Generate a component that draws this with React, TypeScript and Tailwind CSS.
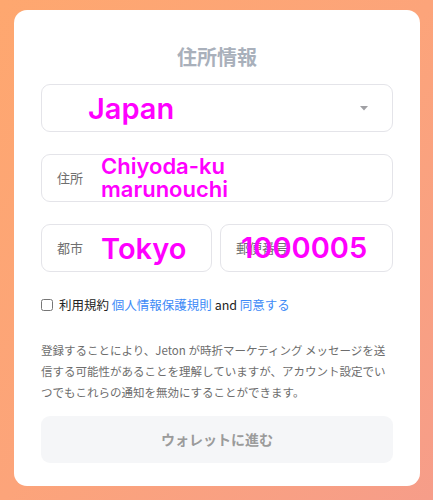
import { useState } from "react";

const cjk = "font-['Noto_Sans_CJK_JP','Noto_Sans',sans-serif]";
const overlay = "font-['Inter','Noto_Sans',sans-serif] font-semibold text-[#ff00ff]";

const Field = ({ label, children }: { label: string; children?: React.ReactNode }) => (
  <div className="flex h-[48px] items-center rounded-[9px] border border-[#e4e4e9] bg-white pl-[15px]">
    <span className={`${cjk} text-[13px] text-[#6f6f6f]`}>{label}</span>
    {children}
  </div>
);

export default function App() {
  const [agree, setAgree] = useState(false);

  return (
    <div className="h-[500px] w-full bg-gradient-to-br from-[#fea76f] via-[#fca47a] to-[#f69d89] pt-[10px] pl-[14px]">
      <div className="flex h-[476px] w-[406px] flex-col rounded-[13px] bg-white px-[27px] pt-[34px]">
        <h1 className={`${cjk} text-center text-[20px] font-bold leading-[26px] text-[#a9b0bb]`}>
          住所情報
        </h1>

        {/* Country select */}
        <div className="mt-[14px] flex h-[48px] items-center justify-between rounded-[9px] border border-[#e4e4e9] bg-white pl-[46px] pr-[24px]">
          <span className={`${overlay} text-[29px] leading-none`}>Japan</span>
          <svg width="8" height="5" viewBox="0 0 8 5">
            <path d="M0 0h8L4 4.5z" fill="#a0a0a4" />
          </svg>
        </div>

        {/* Address */}
        <div className="mt-[22px]">
          <Field label="住所">
            <div className={`${overlay} ml-[18px] w-[150px] text-[22px] leading-[23px]`}>
              Chiyoda-ku marunouchi
            </div>
          </Field>
        </div>

        {/* City / postal */}
        <div className="mt-[22px] grid grid-cols-[171px_1fr] gap-[8px]">
          <Field label="都市">
            <span className={`${overlay} ml-[18px] text-[29px] leading-none`}>Tokyo</span>
          </Field>
          <div className="relative">
            <Field label="郵便番号" />
            <span
              className={`${overlay} absolute left-[21px] top-[9px] text-[29px] leading-[29px]`}
            >
              1000005
            </span>
          </div>
        </div>

        {/* Terms */}
        <label className={`${cjk} mt-[24px] flex items-center text-[12.5px] text-[#222]`}>
          <input
            type="checkbox"
            checked={agree}
            onChange={(e) => setAgree(e.target.checked)}
            className="mr-[6px] h-[12px] w-[12px]"
          />
          <span>
            利用規約 <a className="text-[#3d8af7]">個人情報保護規則</a> and{" "}
            <a className="text-[#3d8af7]">同意する</a>
          </span>
        </label>

        <p className={`${cjk} mt-[25px] text-[11.5px] leading-[21px] text-[#6d6d6d]`}>
          登録することにより、Jeton が時折マーケティング メッセージを送信する可能性があることを理解していますが、アカウント設定でいつでもこれらの通知を無効にすることができます。
        </p>

        <button
          className={`${cjk} mt-[13px] h-[47px] w-full rounded-[9px] bg-[#f5f6f8] text-[14px] font-bold text-[#9b9b9b]`}
        >
          ウォレットに進む
        </button>
      </div>
    </div>
  );
}
